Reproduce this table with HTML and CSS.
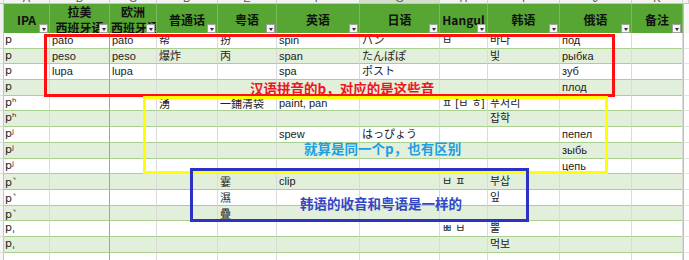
FILE: index.html
```html
<!DOCTYPE html>
<html lang="zh">
<head>
<meta charset="utf-8">
<link rel="stylesheet" href="styles.css">
</head>
<body>
<div class="sheet">
  <div class="row letters">
    <div class="c"></div><div class="c"><span>A</span></div><div class="c"><span>B</span></div><div class="c"><span>C</span></div><div class="c"><span>D</span></div><div class="c"><span>E</span></div><div class="c"><span>F</span></div><div class="c sel"><span>G</span></div><div class="c"><span>H</span></div><div class="c"><span>I</span></div><div class="c"><span>J</span></div><div class="c"><span>K</span></div><div class="c"></div>
  </div>
  <div class="row head">
    <div class="c side"></div>
    <div class="c"><span>IPA</span><i class="dd"></i></div>
    <div class="c fz"><span>拉美</span><span>西班牙语</span><i class="dd"></i></div>
    <div class="c"><span>欧洲</span><span class="l2">西班牙语</span><i class="dd"></i></div>
    <div class="c"><span>普通话</span><i class="dd"></i></div>
    <div class="c"><span>粤语</span><i class="dd"></i></div>
    <div class="c"><span>英语</span><i class="dd"></i></div>
    <div class="c"><span>日语</span><i class="dd"></i></div>
    <div class="c"><span>Hangul</span><i class="dd"></i></div>
    <div class="c"><span>韩语</span><i class="dd"></i></div>
    <div class="c"><span>俄语</span><i class="dd"></i></div>
    <div class="c"><span>备注</span><i class="dd"></i></div>
    <div class="c end"></div>
  </div>

  <div class="row data"><div class="c side"></div><div class="c ipa">p</div><div class="c fz">pato</div><div class="c">pato</div><div class="c">帮</div><div class="c">扮</div><div class="c">spin</div><div class="c ja">パン</div><div class="c ko">ㅂ</div><div class="c ko">바다</div><div class="c">под</div><div class="c"></div><div class="c end"></div></div>
  <div class="row data g"><div class="c side"></div><div class="c ipa">p</div><div class="c fz">peso</div><div class="c">peso</div><div class="c">爆炸</div><div class="c">丙</div><div class="c">span</div><div class="c ja">たんぽぽ</div><div class="c ko"></div><div class="c ko">빛</div><div class="c">рыбка</div><div class="c"></div><div class="c end"></div></div>
  <div class="row data"><div class="c side"></div><div class="c ipa">p</div><div class="c fz">lupa</div><div class="c">lupa</div><div class="c"></div><div class="c"></div><div class="c">spa</div><div class="c ja">ポスト</div><div class="c ko"></div><div class="c ko"></div><div class="c">зуб</div><div class="c"></div><div class="c end"></div></div>
  <div class="row data g"><div class="c side"></div><div class="c ipa">p</div><div class="c fz"></div><div class="c"></div><div class="c"></div><div class="c"></div><div class="c"></div><div class="c ja"></div><div class="c ko"></div><div class="c ko"></div><div class="c">плод</div><div class="c"></div><div class="c end"></div></div>
  <div class="row data"><div class="c side"></div><div class="c ipa">pʰ</div><div class="c fz"></div><div class="c"></div><div class="c tc">湧</div><div class="c tc">一鋪清袋</div><div class="c">paint, pan</div><div class="c ja"></div><div class="c ko">ㅍ [ㅂ ㅎ] [</div><div class="c ko">푸서리</div><div class="c"></div><div class="c"></div><div class="c end"></div></div>
  <div class="row data g"><div class="c side"></div><div class="c ipa">pʰ</div><div class="c fz"></div><div class="c"></div><div class="c"></div><div class="c"></div><div class="c"></div><div class="c ja"></div><div class="c ko"></div><div class="c ko">잡학</div><div class="c"></div><div class="c"></div><div class="c end"></div></div>
  <div class="row data"><div class="c side"></div><div class="c ipa">pʲ</div><div class="c fz"></div><div class="c"></div><div class="c"></div><div class="c"></div><div class="c">spew</div><div class="c ja">はっぴょう</div><div class="c ko"></div><div class="c ko"></div><div class="c">пепел</div><div class="c"></div><div class="c end"></div></div>
  <div class="row data g"><div class="c side"></div><div class="c ipa">pʲ</div><div class="c fz"></div><div class="c"></div><div class="c"></div><div class="c"></div><div class="c"></div><div class="c ja"></div><div class="c ko"></div><div class="c ko"></div><div class="c">зыбь</div><div class="c"></div><div class="c end"></div></div>
  <div class="row data"><div class="c side"></div><div class="c ipa">pʲ</div><div class="c fz"></div><div class="c"></div><div class="c"></div><div class="c"></div><div class="c"></div><div class="c ja"></div><div class="c ko"></div><div class="c ko"></div><div class="c">цепь</div><div class="c"></div><div class="c end"></div></div>
  <div class="row data g"><div class="c side"></div><div class="c ipa">p<span class="cn">⌝</span></div><div class="c fz"></div><div class="c"></div><div class="c"></div><div class="c tc">霎</div><div class="c">clip</div><div class="c ja"></div><div class="c ko">ㅂ ㅍ</div><div class="c ko">부삽</div><div class="c"></div><div class="c"></div><div class="c end"></div></div>
  <div class="row data"><div class="c side"></div><div class="c ipa">p<span class="cn">⌝</span></div><div class="c fz"></div><div class="c"></div><div class="c"></div><div class="c tc">濕</div><div class="c"></div><div class="c ja"></div><div class="c ko"></div><div class="c ko">잎</div><div class="c"></div><div class="c"></div><div class="c end"></div></div>
  <div class="row data g"><div class="c side"></div><div class="c ipa">p<span class="cn">⌝</span></div><div class="c fz"></div><div class="c"></div><div class="c"></div><div class="c tc">疊</div><div class="c"></div><div class="c ja"></div><div class="c ko"></div><div class="c ko"></div><div class="c"></div><div class="c"></div><div class="c end"></div></div>
  <div class="row data"><div class="c side"></div><div class="c ipa">pˌ</div><div class="c fz"></div><div class="c"></div><div class="c"></div><div class="c"></div><div class="c"></div><div class="c ja"></div><div class="c ko">ㅃ ㅂ</div><div class="c ko">뿔</div><div class="c"></div><div class="c"></div><div class="c end"></div></div>
  <div class="row data g"><div class="c side"></div><div class="c ipa">pˌ</div><div class="c fz"></div><div class="c"></div><div class="c"></div><div class="c"></div><div class="c"></div><div class="c ja"></div><div class="c ko"></div><div class="c ko">먹보</div><div class="c"></div><div class="c"></div><div class="c end"></div></div>
  <div class="row data"><div class="c side"></div><div class="c ipa"></div><div class="c fz"></div><div class="c"></div><div class="c"></div><div class="c"></div><div class="c"></div><div class="c ja"></div><div class="c ko"></div><div class="c ko"></div><div class="c"></div><div class="c"></div><div class="c end"></div></div>

  <div class="box red"></div>
  <div class="box yel"></div>
  <div class="box blu"></div>
  <div class="lbl lr">汉语拼音的b，对应的是这些音</div>
  <div class="lbl lb">就算是同一个p，也有区别</div>
  <div class="lbl ld">韩语的收音和粤语是一样的</div>
</div>
</body>
</html>
```

FILE: styles.css
```css
body {
  margin: 0;
  background: #fff;
  font-family: "Liberation Sans", "Noto Sans CJK SC", sans-serif;
}

.sheet {
  position: relative;
  width: 689px;
  height: 260px;
  overflow: hidden;
  display: flex;
  flex-direction: column;
}

.row {
  display: grid;
  grid-template-columns: 4px 46px 60px 47px 61px 59px 83px 80px 48px 72px 72px 51px 6px;
  flex: none;
}

.c {
  box-sizing: border-box;
  min-width: 0;
}

/* column letters strip */
.letters {
  height: 4px;
  background: #f3f3f3;
}
.letters .c {
  overflow: hidden;
  border-right: 1px solid #d2d2d2;
  border-bottom: 1px solid #c4c4c4;
  text-align: center;
  font-size: 11px;
  color: #555;
}
.letters .c span {
  display: block;
  line-height: 12px;
  margin-top: -8px;
}
.letters .sel {
  background: #d3dfcd;
}

/* header */
.head {
  height: 29px;
  background: #57a633;
}
.head .c {
  position: relative;
  display: flex;
  flex-direction: column;
  align-items: center;
  justify-content: center;
  padding-top: 3px;
  overflow: hidden;
  white-space: nowrap;
  font-family: "Noto Sans CJK SC", sans-serif;
  font-weight: 700;
  font-size: 12px;
  line-height: 16px;
  color: #111;
  border-right: 1px solid rgba(255, 255, 255, 0.22);
}
.head .c .l2 {
  align-self: flex-start;
  padding-left: 1px;
}
.head .side {
  background: #f0f0f0;
  border-right: 1px solid #c4c4c4;
}
.head .end {
  background: #f7f7f7;
  border-left: 1px solid #a9d08e;
}

.dd {
  position: absolute;
  right: 1px;
  bottom: 0;
  width: 9px;
  height: 9px;
  box-sizing: border-box;
  background: #f4f4f4;
  border: 1px solid #a0a0a0;
}
.dd::after {
  content: "";
  position: absolute;
  left: 1.5px;
  top: 2.5px;
  border-left: 2.5px solid transparent;
  border-right: 2.5px solid transparent;
  border-top: 3px solid #333;
}

/* data rows */
.data {
  height: 15.7px;
}
.data .c {
  overflow: hidden;
  white-space: nowrap;
  padding: 0 2px;
  font-size: 11px;
  line-height: 14.7px;
  color: #222;
  border-right: 1px solid #dadada;
  border-bottom: 1px solid #a9d08e;
}
.data.g .c {
  background: #e2efda;
}
.data .c.fz {
  border-right-color: #a3a3a3;
}
.data .c.ipa {
  padding-left: 1px;
  font-family: "DejaVu Sans", "Liberation Sans", sans-serif;
}
.ipa .cn {
  font-size: 7px;
  vertical-align: 3px;
  margin-left: 0.5px;
}
.data .c.ja {
  font-family: "Liberation Sans", "Noto Sans CJK JP", sans-serif;
}
.data .c.ko {
  font-family: "Liberation Sans", "Noto Sans CJK KR", sans-serif;
}
.data .c.tc {
  font-family: "Noto Sans CJK TC", sans-serif;
}
.data .c.side,
.data.g .c.side {
  padding: 0;
  background: #f7f7f7;
  border-right: 1px solid #c4c4c4;
  border-bottom: 1px solid #dcdcdc;
}
.data .c.end,
.data.g .c.end {
  background: #fff;
  border-left: 1px solid #a9d08e;
  border-right: none;
  border-bottom: 1px solid #e4e4e4;
}

/* annotation boxes */
.box {
  position: absolute;
  box-sizing: border-box;
  border: 3px solid;
}
.red {
  left: 44px;
  top: 34px;
  width: 571px;
  height: 63px;
  border-color: #ff1010;
}
.yel {
  left: 143px;
  top: 96px;
  width: 465px;
  height: 78px;
  border-color: #ffff00;
}
.blu {
  left: 190px;
  top: 168px;
  width: 339px;
  height: 54px;
  border-color: #2b33c4;
}

.lbl {
  position: absolute;
  white-space: nowrap;
  font-family: "Noto Sans CJK SC", sans-serif;
  font-weight: 700;
  font-size: 13.5px;
  line-height: 16px;
}
.lr {
  left: 250px;
  top: 80px;
  color: #f0141e;
}
.lb {
  left: 304px;
  top: 140px;
  color: #1e9fe2;
}
.ld {
  left: 300px;
  top: 195px;
  color: #3347c2;
}
```
